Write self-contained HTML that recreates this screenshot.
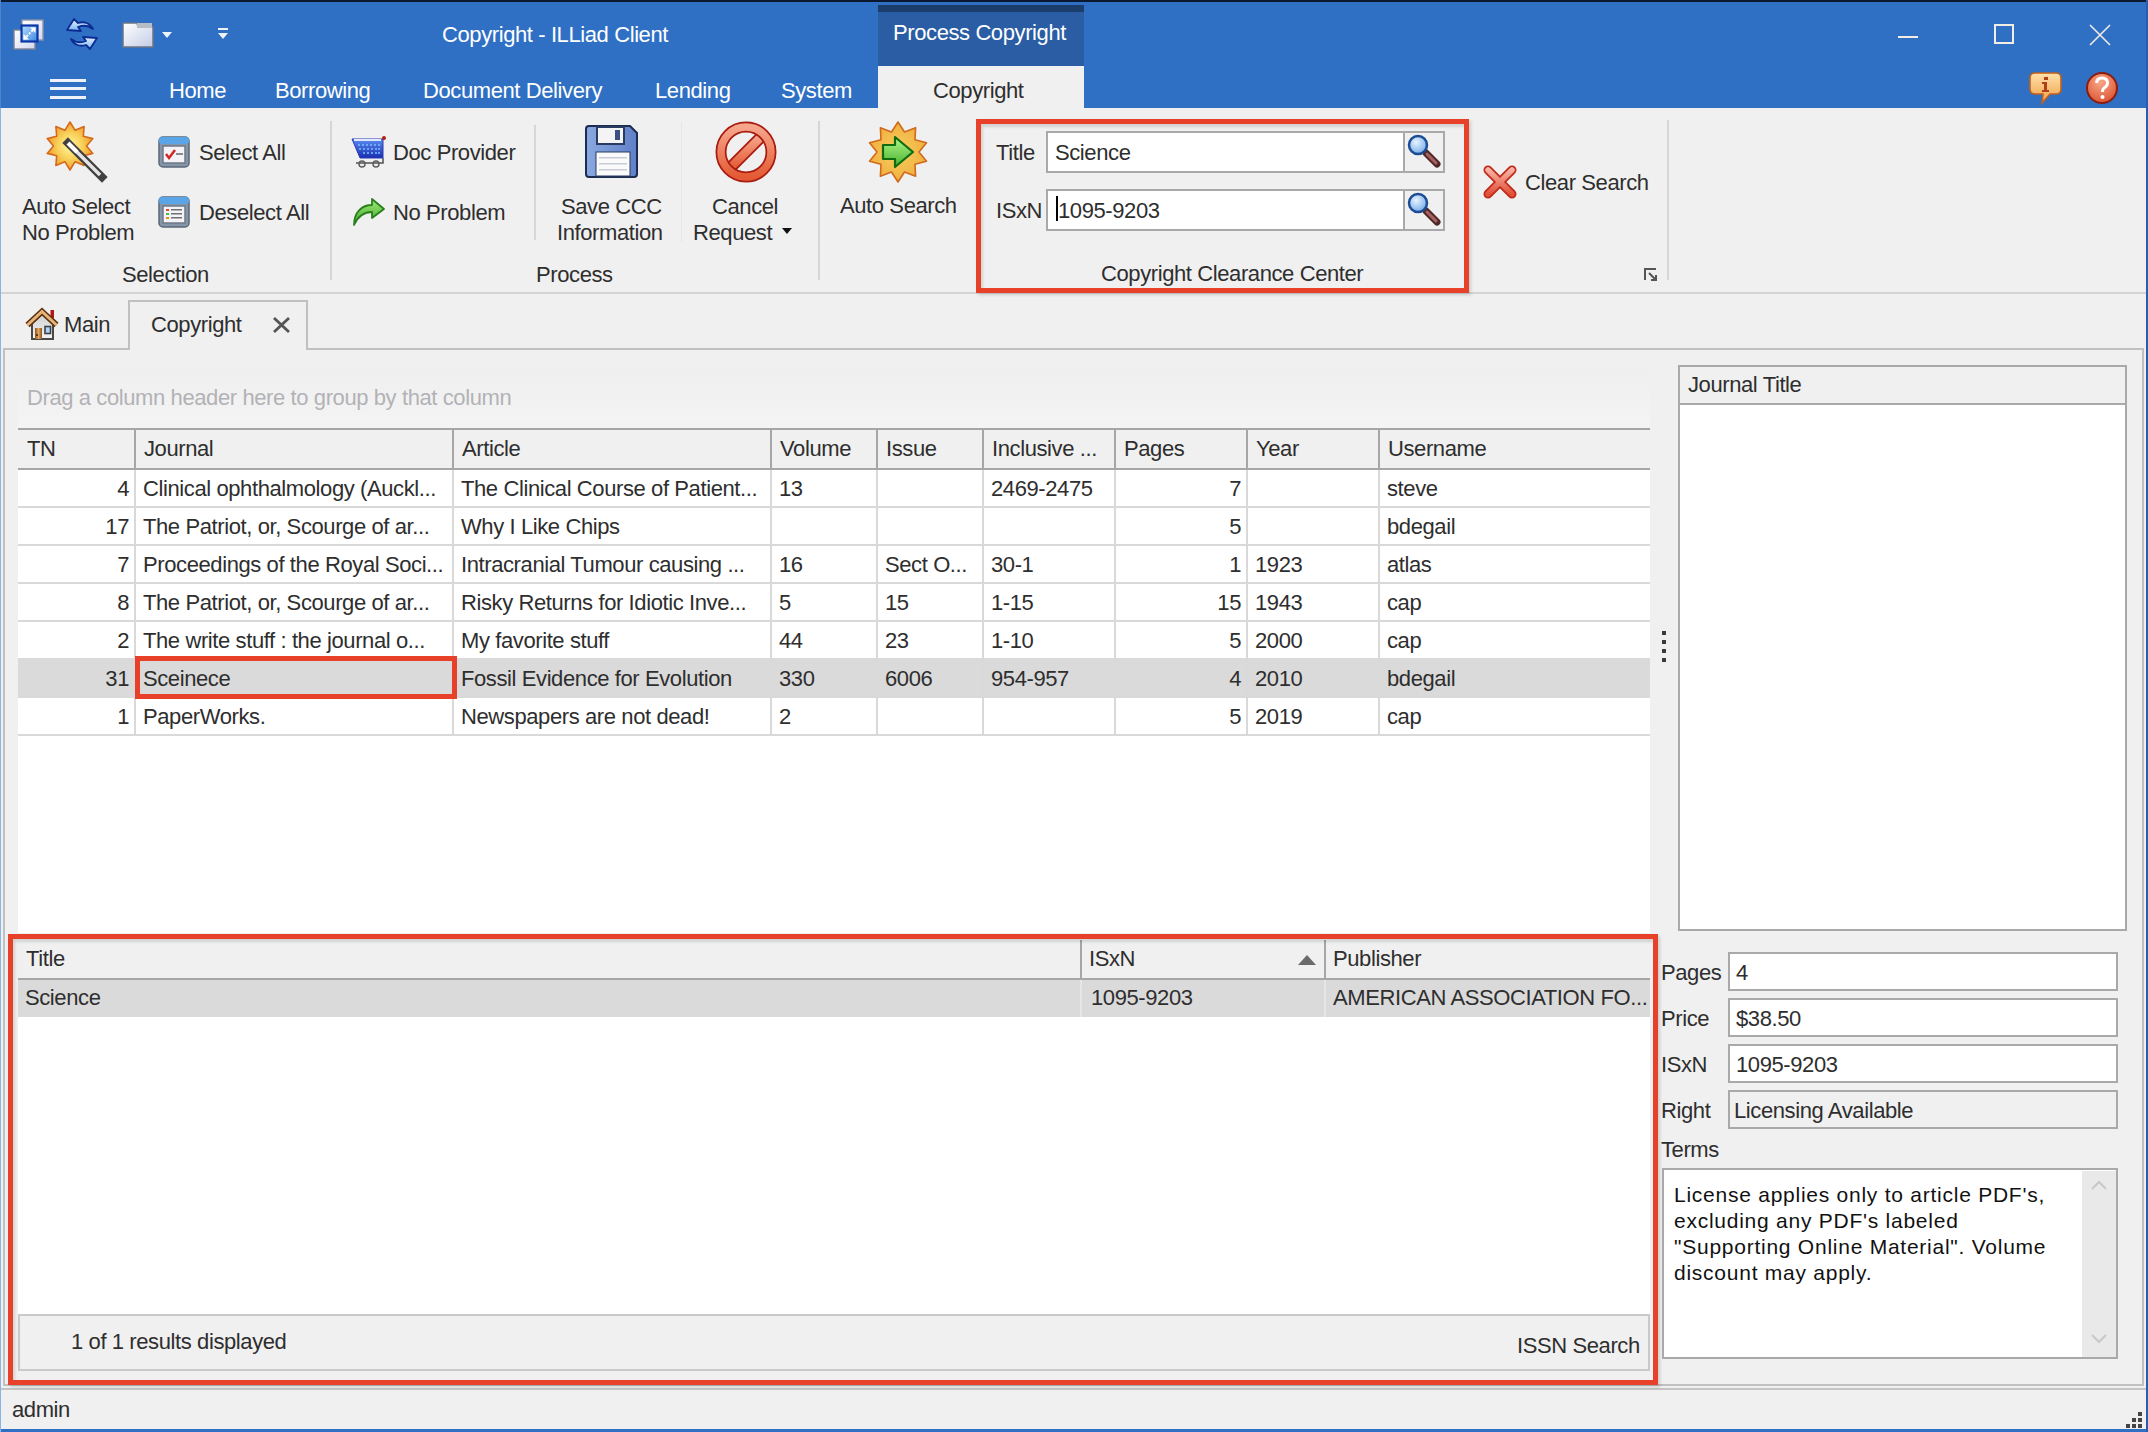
<!DOCTYPE html>
<html><head><meta charset="utf-8">
<style>
html,body{margin:0;padding:0;}
body{width:2148px;height:1432px;overflow:hidden;position:relative;background:#f0f0f0;font-family:"Liberation Sans",sans-serif;}
.a{position:absolute;}
.t{position:absolute;white-space:pre;font-size:22px;line-height:22px;letter-spacing:-0.4px;color:#2e2e2e;}
.w{color:#fff;}
.g{color:#b2b2b6;}
svg{position:absolute;overflow:visible;}
</style></head><body>

<div class="a" style="left:0px;top:0px;width:2148px;height:108px;background:#2f70c4;"></div>
<div class="a" style="left:0px;top:0px;width:2148px;height:2px;background:#0c1830;"></div>
<div class="a" style="left:878px;top:5px;width:206px;height:61px;background:#2a5da4;"></div>
<div class="a" style="left:878px;top:5px;width:206px;height:7px;background:#1b3e6c;"></div>
<div class="a" style="left:878px;top:66px;width:206px;height:42px;background:#f0f0f0;"></div>
<div class="t w" style="left:893px;top:22px;">Process Copyright</div>
<div class="t w" style="left:442px;top:24px;">Copyright - ILLiad Client</div>
<div class="t w" style="left:169px;top:80px;">Home</div>
<div class="t w" style="left:275px;top:80px;">Borrowing</div>
<div class="t w" style="left:423px;top:80px;">Document Delivery</div>
<div class="t w" style="left:655px;top:80px;">Lending</div>
<div class="t w" style="left:781px;top:80px;">System</div>
<div class="t " style="left:933px;top:80px;">Copyright</div>
<div class="a" style="left:50px;top:79px;width:36px;height:3px;background:#eef2fa;"></div>
<div class="a" style="left:50px;top:87px;width:36px;height:3px;background:#eef2fa;"></div>
<div class="a" style="left:50px;top:96px;width:36px;height:3px;background:#eef2fa;"></div>
<svg style="left:10px;top:16px;" width="38" height="38" viewBox="0 0 38 38">
 <defs><linearGradient id="rw" x1="0" y1="0" x2="1" y2="1"><stop offset="0" stop-color="#ffffff"/><stop offset="1" stop-color="#d4d8ee"/></linearGradient>
 <linearGradient id="rb" x1="0" y1="0" x2="1" y2="1"><stop offset="0" stop-color="#b8dcff"/><stop offset="1" stop-color="#3c88e0"/></linearGradient></defs>
 <rect x="4" y="14" width="21" height="19" fill="url(#rw)" stroke="#7c8494" stroke-width="1.4"/>
 <rect x="12" y="4" width="21" height="20" fill="url(#rw)" stroke="#8c94a4" stroke-width="1.4"/>
 <rect x="11.5" y="9.5" width="16" height="16" fill="url(#rb)" stroke="#0a36a8" stroke-width="2.2"/>
 <path d="M14 23 L25 12" stroke="#ffffff" stroke-width="2" stroke-dasharray="2 1.5"/>
 <path d="M13.5 23.5 V18 L19 23.5 Z M25.5 11.5 V17 L20 11.5 Z" fill="#ffffff"/></svg><svg style="left:64px;top:16px;" width="38" height="38" viewBox="0 0 38 38">
 <defs><linearGradient id="ra" x1="0" y1="0" x2="0" y2="1"><stop offset="0" stop-color="#e4f2ff"/><stop offset="1" stop-color="#78b4f0"/></linearGradient></defs>
 <path d="M29 13 C26 7 20 5 14 7 L10 3 L3 14 L17 15 L14 11 C19 9 24 9 29 13 Z" fill="url(#ra)" stroke="#0c2c94" stroke-width="1.8" stroke-linejoin="round"/>
 <path d="M7 23 C10 29 16 31 22 29 L26 33 L33 22 L19 21 L22 25 C17 27 12 27 7 23 Z" fill="url(#ra)" stroke="#0c2c94" stroke-width="1.8" stroke-linejoin="round"/></svg><svg style="left:120px;top:20px;" width="36" height="30" viewBox="0 0 36 30">
 <defs><linearGradient id="fg" x1="0" y1="0" x2="1" y2="1"><stop offset="0" stop-color="#ffffff"/><stop offset="1" stop-color="#c4cde6"/></linearGradient></defs>
 <path d="M3 3 H17 L18 7 H33 V27 H3 Z" fill="url(#fg)" stroke="#6c7486" stroke-width="1.5"/>
 <rect x="17" y="3" width="15" height="5" fill="#b8bcc4"/></svg><svg style="left:160px;top:30px;" width="14" height="10" viewBox="0 0 14 10"><path d="M2 2 H12 L7 8 Z" fill="#eef2fa"/></svg><svg style="left:216px;top:26px;" width="14" height="14" viewBox="0 0 14 14"><rect x="2" y="2" width="10" height="2" fill="#eef2fa"/><path d="M2 7 H12 L7 13 Z" fill="#eef2fa"/></svg><svg style="left:1896px;top:34px;" width="24" height="6" viewBox="0 0 24 6"><rect x="2" y="2" width="20" height="2" fill="#f2ece6"/></svg><svg style="left:1992px;top:22px;" width="24" height="24" viewBox="0 0 24 24"><rect x="3" y="3" width="18" height="18" fill="none" stroke="#f2ece6" stroke-width="2"/></svg><svg style="left:2087px;top:22px;" width="26" height="26" viewBox="0 0 26 26"><path d="M3 3 L23 23 M23 3 L3 23" stroke="#f2ece6" stroke-width="1.6"/></svg><svg style="left:2028px;top:70px;" width="36" height="36" viewBox="0 0 36 36">
 <defs><linearGradient id="ib" x1="0" y1="0" x2="0" y2="1"><stop offset="0" stop-color="#ffe0a8"/><stop offset="1" stop-color="#f0a048"/></linearGradient></defs>
 <path d="M7 3 H28 Q33 3 33 8 V19 Q33 24 28 24 H22 L14 33 L15 24 H7 Q2 24 2 19 V8 Q2 3 7 3 Z" fill="url(#ib)" stroke="#c0601c" stroke-width="1.6"/>
 <rect x="16" y="7" width="4" height="3" fill="#b04018"/><path d="M14 12 H19 V20 H21 V22 H14 V20 H16 V14 H14Z" fill="#b04018"/></svg><svg style="left:2084px;top:70px;" width="36" height="36" viewBox="0 0 36 36">
 <defs><radialGradient id="hb" cx="0.45" cy="0.3" r="0.8"><stop offset="0" stop-color="#f8a888"/><stop offset="1" stop-color="#d84a28"/></radialGradient></defs>
 <circle cx="18" cy="18" r="15" fill="url(#hb)" stroke="#8c1c10" stroke-width="2"/>
 <path d="M12.5 13 Q13 8 18 8 Q23.5 8 23.5 13 Q23.5 16 20 18 Q18.5 19 18.5 22" fill="none" stroke="#fff" stroke-width="3"/>
 <circle cx="18.5" cy="27" r="2" fill="#fff"/></svg>
<div class="a" style="left:0px;top:108px;width:2148px;height:184px;background:#f0f0f0;"></div>
<div class="a" style="left:0px;top:292px;width:2148px;height:2px;background:#d4d4d4;"></div>
<div class="a" style="left:330px;top:121px;width:2px;height:159px;background:#d6d6d6;"></div>
<div class="a" style="left:534px;top:125px;width:2px;height:115px;background:#d6d6d6;"></div>
<div class="a" style="left:818px;top:121px;width:2px;height:159px;background:#d6d6d6;"></div>
<div class="a" style="left:681px;top:122px;width:1px;height:120px;background:#e6e6e6;"></div>
<div class="a" style="left:1667px;top:120px;width:2px;height:160px;background:#d6d6d6;"></div>
<div class="t " style="left:22px;top:196px;">Auto Select</div>
<div class="t " style="left:22px;top:222px;">No Problem</div>
<div class="t " style="left:199px;top:142px;">Select All</div>
<div class="t " style="left:199px;top:202px;">Deselect All</div>
<div class="t " style="left:122px;top:264px;">Selection</div>
<div class="t " style="left:393px;top:142px;">Doc Provider</div>
<div class="t " style="left:393px;top:202px;">No Problem</div>
<div class="t " style="left:561px;top:196px;">Save CCC</div>
<div class="t " style="left:557px;top:222px;">Information</div>
<div class="t " style="left:712px;top:196px;">Cancel</div>
<div class="t " style="left:693px;top:222px;">Request</div>
<div class="t " style="left:536px;top:264px;">Process</div>
<div class="t " style="left:840px;top:195px;">Auto Search</div>
<div class="t " style="left:996px;top:142px;">Title</div>
<div class="t " style="left:996px;top:200px;">ISxN</div>
<div class="a" style="left:1046px;top:131px;width:359px;height:42px;background:#fff;border:2px solid #a9a9a9;box-sizing:border-box;"></div>
<div class="a" style="left:1403px;top:131px;width:42px;height:42px;background:#f0f0f0;border:2px solid #a9a9a9;box-sizing:border-box;"></div>
<div class="a" style="left:1046px;top:189px;width:359px;height:42px;background:#fff;border:2px solid #a9a9a9;box-sizing:border-box;"></div>
<div class="a" style="left:1403px;top:189px;width:42px;height:42px;background:#f0f0f0;border:2px solid #a9a9a9;box-sizing:border-box;"></div>
<div class="t " style="left:1055px;top:142px;">Science</div>
<div class="t " style="left:1058px;top:200px;">1095-9203</div>
<div class="a" style="left:1056px;top:196px;width:2px;height:25px;background:#000;"></div>
<div class="t " style="left:1101px;top:263px;">Copyright Clearance Center</div>
<div class="t " style="left:1525px;top:172px;">Clear Search</div>
<svg style="left:42px;top:118px;" width="70" height="70" viewBox="0 0 70 70">
 <defs><radialGradient id="ws" cx="0.5" cy="0.5" r="0.5"><stop offset="0" stop-color="#fff7a0"/><stop offset="0.55" stop-color="#f8d058"/><stop offset="1" stop-color="#f0a030"/></radialGradient></defs>
 <polygon points="28.0,4.0 33.1,12.3 42.1,8.6 41.3,18.3 50.8,20.6 44.5,28.0 50.8,35.4 41.3,37.7 42.1,47.4 33.1,43.7 28.0,52.0 22.9,43.7 13.9,47.4 14.7,37.7 5.2,35.4 11.5,28.0 5.2,20.6 14.7,18.3 13.9,8.6 22.9,12.3" fill="url(#ws)" stroke="#d46a1a" stroke-width="1.6" stroke-linejoin="round"/>
 <path d="M26 25 L60 59" stroke="#404040" stroke-width="8" stroke-linecap="square"/>
 <path d="M27 26 L58 57" stroke="#e4e4e4" stroke-width="3.5"/>
 <path d="M26 25 L35 34" stroke="#ffffff" stroke-width="4"/></svg><svg style="left:156px;top:134px;" width="36" height="36" viewBox="0 0 36 36">
 <rect x="3" y="3" width="30" height="30" rx="4" fill="#8696a6" stroke="#5a6878" stroke-width="1.5"/>
 <rect x="3" y="3" width="30" height="7" rx="3" fill="#5aa4e8"/>
 <rect x="7" y="12" width="22" height="17" fill="#f4f4f8" stroke="#6c7a8a" stroke-width="1.5"/>
 <path d="M10 20 L13 24 L19 16" fill="none" stroke="#d02828" stroke-width="2.5"/>
 <rect x="20" y="19" width="7" height="2" fill="#8a8a8a"/></svg><svg style="left:156px;top:194px;" width="36" height="36" viewBox="0 0 36 36">
 <rect x="3" y="3" width="30" height="30" rx="4" fill="#8696a6" stroke="#5a6878" stroke-width="1.5"/>
 <rect x="3" y="3" width="30" height="7" rx="3" fill="#5aa4e8"/>
 <rect x="7" y="12" width="22" height="17" fill="#f4f4f8" stroke="#6c7a8a" stroke-width="1.5"/>
 <rect x="10" y="15" width="3" height="2" fill="#e04830"/><rect x="10" y="19" width="3" height="2" fill="#48c040"/><rect x="10" y="23" width="3" height="2" fill="#e89020"/>
 <rect x="15" y="15" width="11" height="1.5" fill="#707070"/><rect x="15" y="19" width="11" height="1.5" fill="#707070"/><rect x="15" y="23" width="11" height="1.5" fill="#707070"/></svg><svg style="left:350px;top:134px;" width="38" height="38" viewBox="0 0 38 38">
 <defs><linearGradient id="cg" x1="0" y1="0" x2="0" y2="1"><stop offset="0" stop-color="#5a8cf0"/><stop offset="1" stop-color="#1a2cb0"/></linearGradient></defs>
 <path d="M2 5 H33 V24 H10 Z" fill="url(#cg)" stroke="#2a3ab8" stroke-width="1"/>
 <rect x="4" y="5" width="27" height="2" fill="#e0e8ff"/>
 <g fill="#7ac0ff"><circle cx="9" cy="11" r="1"/><circle cx="13" cy="11" r="1"/><circle cx="17" cy="11" r="1"/><circle cx="21" cy="11" r="1"/><circle cx="25" cy="11" r="1"/><circle cx="29" cy="11" r="1"/>
 <circle cx="10" cy="15" r="1"/><circle cx="14" cy="15" r="1"/><circle cx="18" cy="15" r="1"/><circle cx="22" cy="15" r="1"/><circle cx="26" cy="15" r="1"/><circle cx="29" cy="15" r="1"/>
 <circle cx="14" cy="19" r="1"/><circle cx="18" cy="19" r="1"/><circle cx="22" cy="19" r="1"/><circle cx="26" cy="19" r="1"/><circle cx="29" cy="19" r="1"/></g>
 <circle cx="34" cy="4" r="2" fill="#b02010"/>
 <path d="M33 24 V29 H6" fill="none" stroke="#505050" stroke-width="1.5"/>
 <circle cx="12" cy="30" r="3" fill="none" stroke="#606060" stroke-width="1.5"/><circle cx="26" cy="30" r="3" fill="none" stroke="#606060" stroke-width="1.5"/></svg><svg style="left:350px;top:196px;" width="38" height="34" viewBox="0 0 38 34">
 <defs><linearGradient id="ga" x1="0" y1="0" x2="0" y2="1"><stop offset="0" stop-color="#a0e878"/><stop offset="1" stop-color="#40a828"/></linearGradient></defs>
 <path d="M4 29 C4 16 12 9 22 9 V3 L34 13 L22 22 V16 C14 16 8 20 4 29 Z" fill="url(#ga)" stroke="#28801c" stroke-width="1.8" stroke-linejoin="round"/></svg><svg style="left:584px;top:124px;" width="56" height="56" viewBox="0 0 56 56">
 <defs><linearGradient id="fl" x1="0" y1="0" x2="1" y2="0"><stop offset="0" stop-color="#8aa8e0"/><stop offset="1" stop-color="#6080c8"/></linearGradient></defs>
 <path d="M5 2 H46 L53 9 V50 Q53 53 50 53 H5 Q2 53 2 50 V5 Q2 2 5 2 Z" fill="url(#fl)" stroke="#1c2c50" stroke-width="2"/>
 <rect x="13" y="3" width="27" height="17" fill="#f4f4f4" stroke="#2a3a60" stroke-width="2"/>
 <rect x="31" y="6" width="5" height="10" fill="#3a5080"/>
 <rect x="12" y="28" width="34" height="24" fill="#fafafa" stroke="#2a3a60" stroke-width="1"/>
 <rect x="15" y="33" width="28" height="1.5" fill="#c8ccd4"/><rect x="15" y="39" width="28" height="1.5" fill="#c8ccd4"/><rect x="15" y="45" width="28" height="1.5" fill="#c8ccd4"/></svg><svg style="left:712px;top:118px;" width="68" height="68" viewBox="0 0 68 68">
 <defs><linearGradient id="cn" x1="0" y1="0" x2="0" y2="1"><stop offset="0" stop-color="#f6a68c"/><stop offset="1" stop-color="#e45a34"/></linearGradient></defs>
 <path d="M50 18 L18 50" stroke="#a81c10" stroke-width="12"/>
 <path d="M50 18 L18 50" stroke="url(#cn)" stroke-width="8.5"/>
 <circle cx="34" cy="34" r="25" fill="none" stroke="#a81c10" stroke-width="11"/>
 <circle cx="34" cy="34" r="25" fill="none" stroke="url(#cn)" stroke-width="7.5"/></svg><svg style="left:780px;top:226px;" width="14" height="10" viewBox="0 0 14 10"><path d="M2 2 H12 L7 8 Z" fill="#111"/></svg><svg style="left:864px;top:118px;" width="68" height="68" viewBox="0 0 68 68">
 <defs><radialGradient id="as" cx="0.5" cy="0.5" r="0.5"><stop offset="0" stop-color="#f8d060"/><stop offset="1" stop-color="#f0b040"/></radialGradient>
 <linearGradient id="ag" x1="0" y1="0" x2="0" y2="1"><stop offset="0" stop-color="#b0f888"/><stop offset="1" stop-color="#48b030"/></linearGradient></defs>
 <polygon points="34.0,4.0 40.5,14.0 51.6,9.7 51.0,21.7 62.5,24.7 55.0,34.0 62.5,43.3 51.0,46.3 51.6,58.3 40.5,54.0 34.0,64.0 27.5,54.0 16.4,58.3 17.0,46.3 5.5,43.3 13.0,34.0 5.5,24.7 17.0,21.7 16.4,9.7 27.5,14.0" fill="url(#as)" stroke="#d06a1c" stroke-width="1.6" stroke-linejoin="round"/>
 <path d="M19 27 H31 V19 L49 34 L31 49 V41 H19 Z" fill="url(#ag)" stroke="#106c10" stroke-width="2.2" stroke-linejoin="round"/></svg><svg style="left:1406px;top:133px;" width="36" height="36" viewBox="0 0 36 36">
 <defs><radialGradient id="mg" cx="0.4" cy="0.35" r="0.7"><stop offset="0" stop-color="#e8f4ff"/><stop offset="1" stop-color="#70a8e8"/></radialGradient></defs>
 <path d="M20 20 L31 31" stroke="#502828" stroke-width="7" stroke-linecap="round"/>
 <path d="M21 21 L30 30" stroke="#a86060" stroke-width="3" stroke-linecap="round"/>
 <circle cx="12" cy="12" r="9" fill="url(#mg)" stroke="#1c4c94" stroke-width="2.5"/></svg><svg style="left:1406px;top:191px;" width="36" height="36" viewBox="0 0 36 36">
 <path d="M20 20 L31 31" stroke="#502828" stroke-width="7" stroke-linecap="round"/>
 <path d="M21 21 L30 30" stroke="#a86060" stroke-width="3" stroke-linecap="round"/>
 <circle cx="12" cy="12" r="9" fill="url(#mg)" stroke="#1c4c94" stroke-width="2.5"/></svg><svg style="left:1482px;top:164px;" width="36" height="36" viewBox="0 0 36 36">
 <defs><linearGradient id="cx" x1="0" y1="0" x2="0" y2="1"><stop offset="0" stop-color="#f8b0a0"/><stop offset="1" stop-color="#e0503a"/></linearGradient></defs>
 <path d="M6 6 L30 30 M30 6 L6 30" stroke="#c02818" stroke-width="9" stroke-linecap="round"/>
 <path d="M6 6 L30 30 M30 6 L6 30" stroke="url(#cx)" stroke-width="5.5" stroke-linecap="round"/></svg><svg style="left:1643px;top:267px;" width="16" height="16" viewBox="0 0 16 16"><path d="M2 13 V2 H13" fill="none" stroke="#555" stroke-width="2"/><path d="M6 6 L13 13 M13 8 V13 H8" fill="none" stroke="#555" stroke-width="2"/></svg>
<div class="a" style="left:976px;top:119px;width:493px;height:174px;border:5px solid #e8412a;box-sizing:border-box;box-shadow:2px 2px 3px rgba(0,0,0,0.15), inset 2px 3px 3px rgba(0,0,0,0.12);"></div>
<div class="a" style="left:3px;top:348px;width:2141px;height:1038px;border:2px solid #c0c0c0;border-top:none;box-sizing:border-box;background:#f0f0f0;"></div>
<div class="a" style="left:3px;top:348px;width:2141px;height:2px;background:#c0c0c0;"></div>
<div class="a" style="left:128px;top:300px;width:180px;height:50px;background:#f0f0f0;border:2px solid #c0c0c0;border-bottom:none;box-sizing:border-box;"></div>
<div class="a" style="left:0px;top:1388px;width:2148px;height:2px;background:#c4c4c4;"></div>
<div class="t " style="left:64px;top:314px;">Main</div>
<div class="t " style="left:151px;top:314px;">Copyright</div>
<svg style="left:24px;top:306px;" width="36" height="36" viewBox="0 0 36 36">
 <defs><linearGradient id="hw" x1="0" y1="0" x2="0" y2="1"><stop offset="0" stop-color="#d0d0d0"/><stop offset="1" stop-color="#f4f4f4"/></linearGradient>
 <linearGradient id="hd" x1="0" y1="0" x2="1" y2="0"><stop offset="0" stop-color="#8a5418"/><stop offset="0.5" stop-color="#e0a868"/><stop offset="1" stop-color="#8a5418"/></linearGradient></defs>
 <path d="M8 17 L18 8 L29 17 V33 H8 Z" fill="url(#hw)" stroke="#484848" stroke-width="2"/>
 <rect x="26.5" y="4" width="3.5" height="8" fill="#b01818"/>
 <path d="M3.5 19 L18 5.5 L32.5 19" fill="none" stroke="#5a3410" stroke-width="6" stroke-linejoin="miter"/>
 <path d="M3.5 19 L18 5.5 L32.5 19" fill="none" stroke="#e8b47c" stroke-width="3" stroke-linejoin="miter"/>
 <rect x="11" y="22" width="7" height="11" fill="url(#hd)"/>
 <circle cx="13" cy="29" r="1" fill="#402000"/>
 <rect x="21" y="20.5" width="5.5" height="7" fill="#a8d4ff" stroke="#404040" stroke-width="1.6"/></svg><svg style="left:271px;top:316px;" width="22" height="18" viewBox="0 0 22 18"><path d="M3 2 L18 16 M18 2 L3 16" stroke="#555" stroke-width="2.8"/></svg>
<div class="a" style="left:18px;top:368px;width:1632px;height:61px;background:linear-gradient(#efefef,#f4f4f4);"></div>
<div class="t g" style="left:27px;top:387px;">Drag a column header here to group by that column</div>
<div class="a" style="left:18px;top:429px;width:1632px;height:504px;background:#fff;"></div>
<div class="a" style="left:18px;top:429px;width:1632px;height:40px;background:#f0f0f0;"></div>
<div class="a" style="left:18px;top:428px;width:1632px;height:2px;background:#a6a6a6;"></div>
<div class="a" style="left:18px;top:468px;width:1632px;height:2px;background:#a6a6a6;"></div>
<div class="t " style="left:27px;top:438px;">TN</div>
<div class="a" style="left:134px;top:428px;width:2px;height:42px;background:#a6a6a6;"></div>
<div class="t " style="left:144px;top:438px;">Journal</div>
<div class="a" style="left:452px;top:428px;width:2px;height:42px;background:#a6a6a6;"></div>
<div class="t " style="left:462px;top:438px;">Article</div>
<div class="a" style="left:770px;top:428px;width:2px;height:42px;background:#a6a6a6;"></div>
<div class="t " style="left:780px;top:438px;">Volume</div>
<div class="a" style="left:876px;top:428px;width:2px;height:42px;background:#a6a6a6;"></div>
<div class="t " style="left:886px;top:438px;">Issue</div>
<div class="a" style="left:982px;top:428px;width:2px;height:42px;background:#a6a6a6;"></div>
<div class="t " style="left:992px;top:438px;">Inclusive ...</div>
<div class="a" style="left:1114px;top:428px;width:2px;height:42px;background:#a6a6a6;"></div>
<div class="t " style="left:1124px;top:438px;">Pages</div>
<div class="a" style="left:1246px;top:428px;width:2px;height:42px;background:#a6a6a6;"></div>
<div class="t " style="left:1256px;top:438px;">Year</div>
<div class="a" style="left:1378px;top:428px;width:2px;height:42px;background:#a6a6a6;"></div>
<div class="t " style="left:1388px;top:438px;">Username</div>
<div class="a" style="left:18px;top:506px;width:1632px;height:2px;background:#d9d9d9;"></div>
<div class="t " style="right:2019px;top:478px;text-align:right;">4</div>
<div class="t " style="left:143px;top:478px;">Clinical ophthalmology (Auckl...</div>
<div class="t " style="left:461px;top:478px;">The Clinical Course of Patient...</div>
<div class="t " style="left:779px;top:478px;">13</div>
<div class="t " style="left:991px;top:478px;">2469-2475</div>
<div class="t " style="right:907px;top:478px;text-align:right;">7</div>
<div class="t " style="left:1387px;top:478px;">steve</div>
<div class="a" style="left:18px;top:544px;width:1632px;height:2px;background:#d9d9d9;"></div>
<div class="t " style="right:2019px;top:516px;text-align:right;">17</div>
<div class="t " style="left:143px;top:516px;">The Patriot, or, Scourge of ar...</div>
<div class="t " style="left:461px;top:516px;">Why I Like Chips</div>
<div class="t " style="right:907px;top:516px;text-align:right;">5</div>
<div class="t " style="left:1387px;top:516px;">bdegail</div>
<div class="a" style="left:18px;top:582px;width:1632px;height:2px;background:#d9d9d9;"></div>
<div class="t " style="right:2019px;top:554px;text-align:right;">7</div>
<div class="t " style="left:143px;top:554px;">Proceedings of the Royal Soci...</div>
<div class="t " style="left:461px;top:554px;">Intracranial Tumour causing ...</div>
<div class="t " style="left:779px;top:554px;">16</div>
<div class="t " style="left:885px;top:554px;">Sect O...</div>
<div class="t " style="left:991px;top:554px;">30-1</div>
<div class="t " style="right:907px;top:554px;text-align:right;">1</div>
<div class="t " style="left:1255px;top:554px;">1923</div>
<div class="t " style="left:1387px;top:554px;">atlas</div>
<div class="a" style="left:18px;top:620px;width:1632px;height:2px;background:#d9d9d9;"></div>
<div class="t " style="right:2019px;top:592px;text-align:right;">8</div>
<div class="t " style="left:143px;top:592px;">The Patriot, or, Scourge of ar...</div>
<div class="t " style="left:461px;top:592px;">Risky Returns for Idiotic Inve...</div>
<div class="t " style="left:779px;top:592px;">5</div>
<div class="t " style="left:885px;top:592px;">15</div>
<div class="t " style="left:991px;top:592px;">1-15</div>
<div class="t " style="right:907px;top:592px;text-align:right;">15</div>
<div class="t " style="left:1255px;top:592px;">1943</div>
<div class="t " style="left:1387px;top:592px;">cap</div>
<div class="a" style="left:18px;top:658px;width:1632px;height:2px;background:#d9d9d9;"></div>
<div class="t " style="right:2019px;top:630px;text-align:right;">2</div>
<div class="t " style="left:143px;top:630px;">The write stuff : the journal o...</div>
<div class="t " style="left:461px;top:630px;">My favorite stuff</div>
<div class="t " style="left:779px;top:630px;">44</div>
<div class="t " style="left:885px;top:630px;">23</div>
<div class="t " style="left:991px;top:630px;">1-10</div>
<div class="t " style="right:907px;top:630px;text-align:right;">5</div>
<div class="t " style="left:1255px;top:630px;">2000</div>
<div class="t " style="left:1387px;top:630px;">cap</div>
<div class="a" style="left:18px;top:659px;width:1632px;height:37px;background:#dadada;"></div>
<div class="a" style="left:18px;top:696px;width:1632px;height:2px;background:#d9d9d9;"></div>
<div class="t " style="right:2019px;top:668px;text-align:right;">31</div>
<div class="t " style="left:143px;top:668px;">Sceinece</div>
<div class="t " style="left:461px;top:668px;">Fossil Evidence for Evolution</div>
<div class="t " style="left:779px;top:668px;">330</div>
<div class="t " style="left:885px;top:668px;">6006</div>
<div class="t " style="left:991px;top:668px;">954-957</div>
<div class="t " style="right:907px;top:668px;text-align:right;">4</div>
<div class="t " style="left:1255px;top:668px;">2010</div>
<div class="t " style="left:1387px;top:668px;">bdegail</div>
<div class="a" style="left:18px;top:734px;width:1632px;height:2px;background:#d9d9d9;"></div>
<div class="t " style="right:2019px;top:706px;text-align:right;">1</div>
<div class="t " style="left:143px;top:706px;">PaperWorks.</div>
<div class="t " style="left:461px;top:706px;">Newspapers are not dead!</div>
<div class="t " style="left:779px;top:706px;">2</div>
<div class="t " style="right:907px;top:706px;text-align:right;">5</div>
<div class="t " style="left:1255px;top:706px;">2019</div>
<div class="t " style="left:1387px;top:706px;">cap</div>
<div class="a" style="left:134px;top:470px;width:2px;height:266px;background:#d9d9d9;"></div>
<div class="a" style="left:452px;top:470px;width:2px;height:266px;background:#d9d9d9;"></div>
<div class="a" style="left:770px;top:470px;width:2px;height:266px;background:#d9d9d9;"></div>
<div class="a" style="left:876px;top:470px;width:2px;height:266px;background:#d9d9d9;"></div>
<div class="a" style="left:982px;top:470px;width:2px;height:266px;background:#d9d9d9;"></div>
<div class="a" style="left:1114px;top:470px;width:2px;height:266px;background:#d9d9d9;"></div>
<div class="a" style="left:1246px;top:470px;width:2px;height:266px;background:#d9d9d9;"></div>
<div class="a" style="left:1378px;top:470px;width:2px;height:266px;background:#d9d9d9;"></div>
<div class="a" style="left:135px;top:656px;width:322px;height:43px;border:5px solid #e8412a;box-sizing:border-box;"></div>
<div class="a" style="left:1678px;top:365px;width:449px;height:566px;background:#fff;border:2px solid #a9a9a9;box-sizing:border-box;"></div>
<div class="a" style="left:1680px;top:367px;width:445px;height:38px;background:#f0f0f0;border-bottom:2px solid #a9a9a9;box-sizing:border-box;"></div>
<div class="t " style="left:1688px;top:374px;">Journal Title</div>
<div class="a" style="left:1662px;top:631px;width:4px;height:4px;background:#3a3a3a;"></div>
<div class="a" style="left:1662px;top:640px;width:4px;height:4px;background:#3a3a3a;"></div>
<div class="a" style="left:1662px;top:649px;width:4px;height:4px;background:#3a3a3a;"></div>
<div class="a" style="left:1662px;top:658px;width:4px;height:4px;background:#3a3a3a;"></div>
<div class="a" style="left:18px;top:940px;width:1632px;height:375px;background:#fff;"></div>
<div class="a" style="left:18px;top:940px;width:1632px;height:38px;background:#f0f0f0;"></div>
<div class="a" style="left:18px;top:978px;width:1632px;height:2px;background:#a6a6a6;"></div>
<div class="a" style="left:1080px;top:940px;width:2px;height:38px;background:#a6a6a6;"></div>
<div class="a" style="left:1324px;top:940px;width:2px;height:38px;background:#a6a6a6;"></div>
<div class="t " style="left:26px;top:948px;">Title</div>
<div class="t " style="left:1089px;top:948px;">ISxN</div>
<div class="t " style="left:1333px;top:948px;">Publisher</div>
<div class="a" style="left:18px;top:980px;width:1632px;height:37px;background:#dadada;"></div>
<div class="a" style="left:1080px;top:980px;width:2px;height:37px;background:#e6e6e6;"></div>
<div class="a" style="left:1324px;top:980px;width:2px;height:37px;background:#e6e6e6;"></div>
<div class="t " style="left:25px;top:987px;">Science</div>
<div class="t " style="left:1091px;top:987px;">1095-9203</div>
<div class="t " style="left:1333px;top:987px;">AMERICAN ASSOCIATION FO...</div>
<div class="a" style="left:18px;top:1314px;width:1632px;height:57px;background:#f0f0f0;border:2px solid #c9c9c9;box-sizing:border-box;"></div>
<div class="t " style="left:71px;top:1331px;">1 of 1 results displayed</div>
<div class="t " style="left:1517px;top:1335px;">ISSN Search</div>
<svg style="left:1296px;top:952px;" width="22" height="16" viewBox="0 0 22 16"><path d="M2 13 L11 3 L20 13 Z" fill="#6a6a6a"/></svg>
<div class="a" style="left:8px;top:934px;width:1650px;height:451px;border:5px solid #e8412a;box-sizing:border-box;box-shadow:2px 2px 3px rgba(0,0,0,0.14), inset 2px 3px 3px rgba(0,0,0,0.12);"></div>
<div class="t " style="left:1661px;top:962px;">Pages</div>
<div class="a" style="left:1728px;top:952px;width:390px;height:39px;background:#fff;border:2px solid #a9a9a9;box-sizing:border-box;"></div>
<div class="t " style="left:1736px;top:962px;">4</div>
<div class="t " style="left:1661px;top:1008px;">Price</div>
<div class="a" style="left:1728px;top:998px;width:390px;height:39px;background:#fff;border:2px solid #a9a9a9;box-sizing:border-box;"></div>
<div class="t " style="left:1736px;top:1008px;">$38.50</div>
<div class="t " style="left:1661px;top:1054px;">ISxN</div>
<div class="a" style="left:1728px;top:1044px;width:390px;height:39px;background:#fff;border:2px solid #a9a9a9;box-sizing:border-box;"></div>
<div class="t " style="left:1736px;top:1054px;">1095-9203</div>
<div class="t " style="left:1661px;top:1100px;">Right</div>
<div class="a" style="left:1728px;top:1090px;width:390px;height:39px;background:#f0f0f0;border:2px solid #a9a9a9;box-sizing:border-box;"></div>
<div class="t " style="left:1734px;top:1100px;">Licensing Available</div>
<div class="t " style="left:1661px;top:1139px;">Terms</div>
<div class="a" style="left:1662px;top:1168px;width:456px;height:191px;background:#fff;border:2px solid #a9a9a9;box-sizing:border-box;"></div>
<div class="a" style="left:2082px;top:1171px;width:34px;height:186px;background:#e9e9e9;"></div>
<div class="t " style="left:1674px;top:1184px;font-size:21px;letter-spacing:0.75px;color:#111;">License applies only to article PDF&#x27;s,</div>
<div class="t " style="left:1674px;top:1210px;font-size:21px;letter-spacing:0.75px;color:#111;">excluding any PDF&#x27;s labeled</div>
<div class="t " style="left:1674px;top:1236px;font-size:21px;letter-spacing:0.75px;color:#111;">&quot;Supporting Online Material&quot;. Volume</div>
<div class="t " style="left:1674px;top:1262px;font-size:21px;letter-spacing:0.75px;color:#111;">discount may apply.</div>
<svg style="left:2089px;top:1178px;" width="20" height="14" viewBox="0 0 20 14"><path d="M3 11 L10 4 L17 11" fill="none" stroke="#c8c8c8" stroke-width="2"/></svg><svg style="left:2089px;top:1332px;" width="20" height="14" viewBox="0 0 20 14"><path d="M3 3 L10 10 L17 3" fill="none" stroke="#c8c8c8" stroke-width="2"/></svg><svg style="left:2120px;top:1406px;" width="24" height="24" viewBox="0 0 24 24"><g fill="#444"><rect x="18" y="6" width="4" height="4"/><rect x="12" y="12" width="4" height="4"/><rect x="18" y="12" width="4" height="4"/><rect x="6" y="18" width="4" height="4"/><rect x="12" y="18" width="4" height="4"/><rect x="18" y="18" width="4" height="4"/></g></svg>
<div class="t " style="left:12px;top:1399px;">admin</div>
<div class="a" style="left:0px;top:1429px;width:2148px;height:3px;background:#2f70c4;"></div>
<div class="a" style="left:0px;top:0px;width:1px;height:1432px;background:#8ab4e8;"></div>
<div class="a" style="left:0px;top:0px;width:1px;height:108px;background:#4a84d0;"></div>
<div class="a" style="left:2146px;top:0px;width:2px;height:1432px;background:#2a5cb0;"></div>
</body></html>
